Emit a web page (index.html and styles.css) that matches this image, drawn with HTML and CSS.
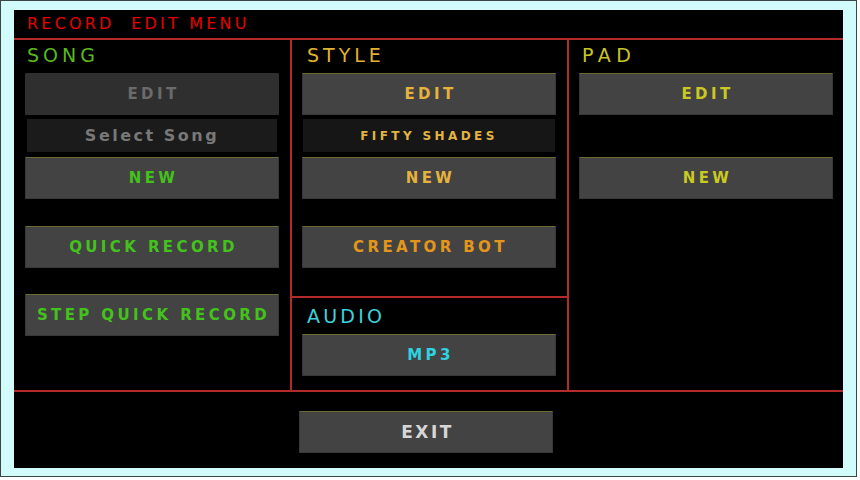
FILE: index.html
```html
<!DOCTYPE html>
<html>
<head>
<meta charset="utf-8">
<link rel="stylesheet" href="styles.css">
</head>
<body>
<div class="screen">
  <div class="panel">
    <div class="titlebar"><span class="title">RECORD&nbsp; EDIT MENU</span></div>
    <div class="main">
      <div class="col col-song">
        <div class="head song">SONG</div>
        <div class="btn disabled">EDIT</div>
        <div class="field sel">Select Song</div>
        <div class="btn g-text gap5">NEW</div>
        <div class="btn g-text gap27">QUICK RECORD</div>
        <div class="btn g-text gap26">STEP QUICK RECORD</div>
      </div>
      <div class="vline"></div>
      <div class="col col-mid">
        <div class="sect style-sect">
          <div class="head style">STYLE</div>
          <div class="btn y-text">EDIT</div>
          <div class="field fifty">FIFTY SHADES</div>
          <div class="btn y-text gap5">NEW</div>
          <div class="btn o-text gap27">CREATOR BOT</div>
        </div>
        <div class="hline"></div>
        <div class="sect audio-sect">
          <div class="head audio">AUDIO</div>
          <div class="btn c-text">MP3</div>
        </div>
      </div>
      <div class="vline"></div>
      <div class="col col-pad">
        <div class="head pad">PAD</div>
        <div class="btn p-text">EDIT</div>
        <div class="btn p-text gap42">NEW</div>
      </div>
    </div>
    <div class="bottom">
      <div class="btn exit">EXIT</div>
    </div>
  </div>
</div>
</body>
</html>
```

FILE: styles.css
```css
html, body {
  margin: 0;
  padding: 0;
  background: #ffffff;
}
.screen {
  width: 857px;
  height: 477px;
  box-sizing: border-box;
  border: 1px solid #3c4646;
  background: #d2fbfc;
  padding: 9px 13px 8px 13px;
}
.panel {
  width: 829px;
  height: 458px;
  background: #000;
  display: flex;
  flex-direction: column;
}
.titlebar {
  height: 28px;
  border-bottom: 2px solid #b22a2a;
  box-sizing: content-box;
  padding-left: 13px;
}
.title {
  display: block;
  font-family: "DejaVu Sans", sans-serif;
  font-size: 16px;
  letter-spacing: 3.2px;
  color: #e80000;
  line-height: 18px;
  padding-top: 5px;
}
.main {
  display: flex;
  height: 350px;
  border-bottom: 2px solid #b22a2a;
}
.vline {
  width: 2px;
  background: #b22a2a;
}
.col {
  display: flex;
  flex-direction: column;
}
.col-song {
  width: 276px;
  padding-left: 11px;
  box-sizing: border-box;
}
.col-mid {
  width: 275px;
}
.col-pad {
  width: 274px;
  padding-left: 10px;
  box-sizing: border-box;
}
.sect {
  display: flex;
  flex-direction: column;
  padding-left: 10px;
}
.style-sect {
  height: 256px;
}
.audio-sect {
  flex: 1;
}
.hline {
  height: 2px;
  background: #b22a2a;
}
.head {
  height: 33px;
  font-family: "DejaVu Sans", sans-serif;
  font-size: 19px;
  letter-spacing: 4px;
  line-height: 20px;
  padding-left: 2px;
  padding-top: 5px;
  box-sizing: border-box;
}
.col-song .head { padding-left: 2px; }
.style-sect .head { padding-left: 5px; }
.col-pad .head { padding-left: 3px; letter-spacing: 5.5px; }
.audio-sect .head { height: 36px; padding-top: 8px; padding-left: 5px; letter-spacing: 3.2px; }
.song { color: #58b81c; }
.style { color: #e2b232; }
.pad { color: #c8c626; }
.audio { color: #3ed2de; }

.btn {
  width: 254px;
  height: 42px;
  box-sizing: border-box;
  background: #434343;
  border: 1px solid #383838;
  border-top: 1px solid #6c6a30;
  border-radius: 1px;
  display: flex;
  align-items: center;
  justify-content: center;
  font-family: "DejaVu Sans", sans-serif;
  font-weight: bold;
  font-size: 15px;
  letter-spacing: 3.4px;
  padding-left: 3px;
}
.btn.disabled {
  background: #2f2f2f;
  border-color: #2f2f2f;
  color: #6b6b6b;
}
.g-text { color: #44c21c; }
.y-text { color: #e6b23e; }
.o-text { color: #e3961a; }
.p-text { color: #c9c922; }
.c-text { color: #2ed2e0; }
.gap5 { margin-top: 5px; }
.gap26 { margin-top: 26px; }
.gap27 { margin-top: 27px; }
.gap42 { margin-top: 42px; }

.field {
  height: 33px;
  margin-top: 4px;
  display: flex;
  align-items: center;
  justify-content: center;
  font-family: "DejaVu Sans", sans-serif;
  font-weight: bold;
}
.sel {
  width: 250px;
  margin-left: 2px;
  background: #1b1b1b;
  color: #787878;
  font-size: 16px;
  letter-spacing: 2.5px;
}
.fifty {
  width: 252px;
  margin-left: 1px;
  background: #161616;
  color: #e2b442;
  font-size: 12px;
  letter-spacing: 3.4px;
}
.bottom {
  flex: 1;
  display: flex;
  padding-top: 19px;
  padding-left: 285px;
  box-sizing: border-box;
}
.btn.exit {
  color: #d6d6d6;
  font-size: 17px;
  letter-spacing: 2.5px;
}
```
